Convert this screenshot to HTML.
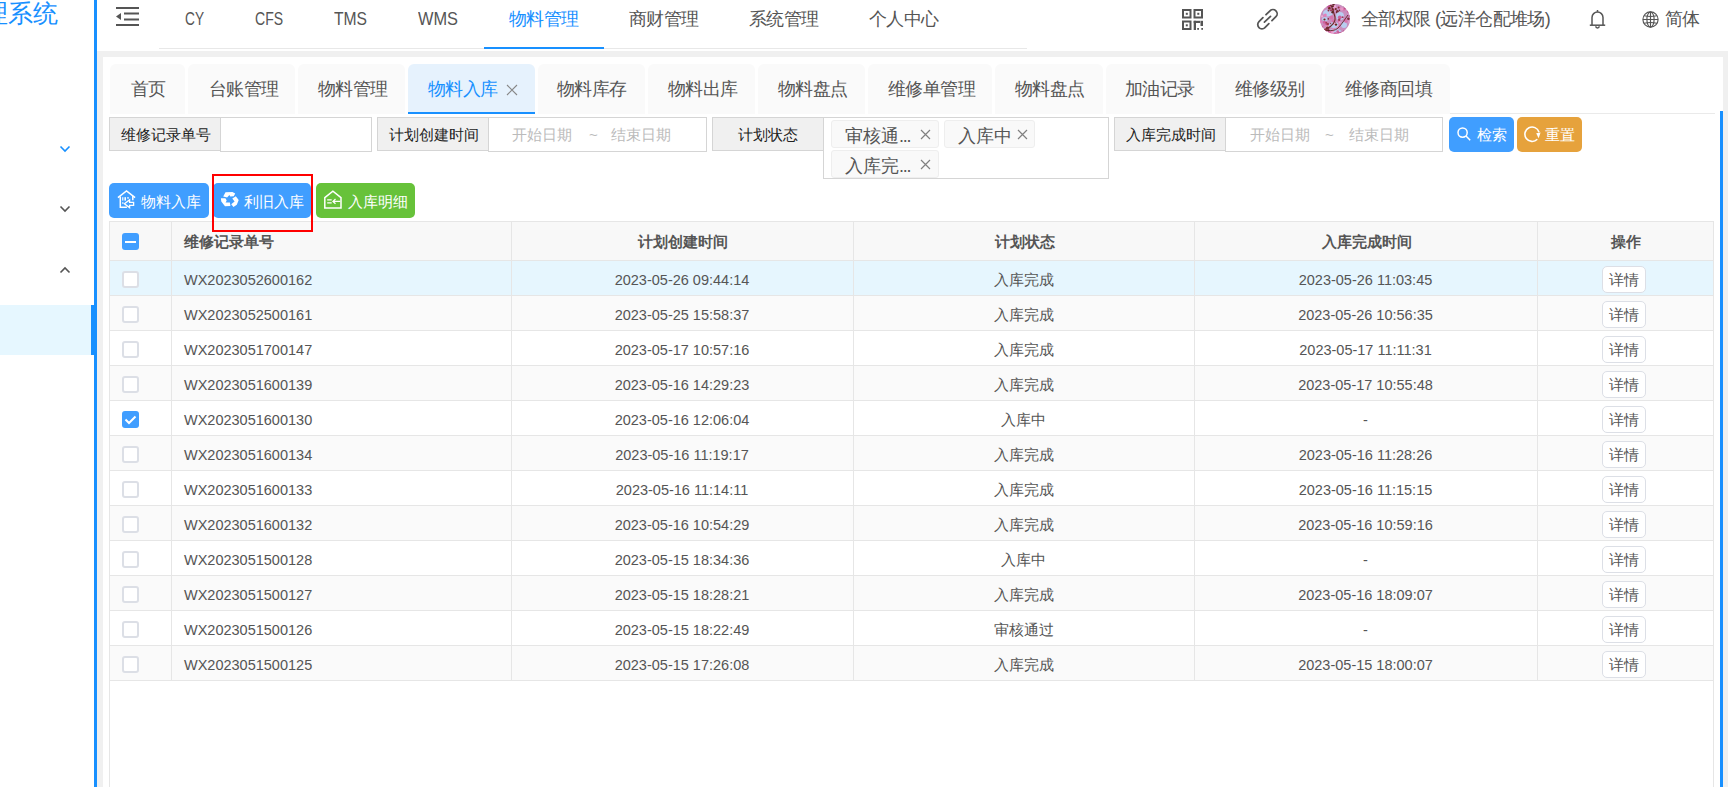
<!DOCTYPE html>
<html><head><meta charset="utf-8">
<style>
*{margin:0;padding:0;box-sizing:border-box}
html,body{width:1728px;height:787px;overflow:hidden;background:#fff;font-family:"Liberation Sans",sans-serif;color:#555}
.a{position:absolute}
.t{position:absolute;white-space:nowrap;line-height:1}
#side{left:0;top:0;width:97px;height:787px;background:#fff;border-right:3px solid #1890ff}
#gray{left:97px;top:51px;width:1631px;height:736px;background:#f0f0f0}
#panel{left:103px;top:57px;width:1620px;height:730px;background:#fff}
.nav{font-size:18px;color:#555;top:9.5px;letter-spacing:-0.6px}
.lat{font-size:18px;transform-origin:0 0;letter-spacing:0}
.tab{position:absolute;top:64px;height:50px;background:#fafafa;border-radius:6px 6px 0 0}
.tabt{font-size:18px;letter-spacing:-0.6px;color:#555;top:80px}
.lbl{position:absolute;background:#f0f0f0;border:1px solid #d5d5d5;height:34px}
.inp{position:absolute;background:#fff;border:1px solid #d5d5d5;height:35px}
.lt{font-size:15px;color:#222}
.ph{font-size:15px;color:#bbb}
.tag{position:absolute;background:#f9f9f9;border:1px solid #eee;border-radius:3px;height:28px}
.btn{position:absolute;border-radius:5px;height:35px;color:#fff}
.bt{font-size:15px;color:#fff}
.hl{position:absolute;height:1px;background:#e6e6e6}
.vl{position:absolute;width:1px;background:#e6e6e6}
.row{position:absolute;left:110px;width:1603px;height:35px}
.cb{position:absolute;left:122px;width:17px;height:17px;border:2px solid #dcdfe6;border-radius:3px;background:#fff}
.cell{font-size:14.5px;color:#555}
.hd{font-size:15px;color:#555;font-weight:bold}
.det{position:absolute;left:1602px;width:44px;height:27px;border:1px solid #dcdfe6;border-radius:5px;background:#fff}
</style></head><body>
<!-- sidebar -->
<div id="side" class="a"></div>
<div class="t" style="left:-16.6px;top:1px;font-size:25px;letter-spacing:-0.3px;color:#1890ff">理系统</div>
<svg class="a" style="left:59px;top:144px" width="12" height="10" viewBox="0 0 12 10"><path d="M1.5 2.5 L6 7 L10.5 2.5" fill="none" stroke="#1890ff" stroke-width="1.6"/></svg>
<svg class="a" style="left:59px;top:204px" width="12" height="10" viewBox="0 0 12 10"><path d="M1.5 2.5 L6 7 L10.5 2.5" fill="none" stroke="#555" stroke-width="1.6"/></svg>
<svg class="a" style="left:59px;top:265px" width="12" height="10" viewBox="0 0 12 10"><path d="M1.5 7.5 L6 3 L10.5 7.5" fill="none" stroke="#555" stroke-width="1.6"/></svg>
<div class="a" style="left:0;top:305px;width:91px;height:50px;background:#e6f7ff"></div>
<div class="a" style="left:91px;top:305px;width:6px;height:50px;background:#1890ff"></div>

<div id="gray" class="a"></div>
<div id="panel" class="a"></div>
<div class="a" style="left:1720px;top:111px;width:3px;height:676px;background:#1890ff"></div>

<!-- top nav -->
<svg class="a" style="left:116px;top:6px" width="24" height="21" viewBox="0 0 24 21"><g fill="#555"><rect x="0" y="1" width="23" height="2"/><rect x="8" y="6.5" width="15" height="2"/><rect x="8" y="12.5" width="15" height="2"/><rect x="0" y="18" width="23" height="2"/><path d="M0 10.5 L5 7 L5 14 Z"/></g></svg>
<div class="t nav lat" style="left:185px;transform:scaleX(0.76)">CY</div>
<div class="t nav lat" style="left:255px;transform:scaleX(0.78)">CFS</div>
<div class="t nav lat" style="left:334px;transform:scaleX(0.87)">TMS</div>
<div class="t nav lat" style="left:418px;transform:scaleX(0.91)">WMS</div>
<div class="t nav" style="left:509px;color:#1890ff">物料管理</div>
<div class="t nav" style="left:629px">商财管理</div>
<div class="t nav" style="left:749px">系统管理</div>
<div class="t nav" style="left:869px">个人中心</div>
<div class="a" style="left:159px;top:48px;width:868px;height:1px;background:#e8e8e8"></div>
<div class="a" style="left:484px;top:47px;width:120px;height:2px;background:#1890ff"></div>

<!-- right icons -->
<svg class="a" style="left:1182px;top:9px" width="21" height="21" viewBox="0 0 21 21"><g fill="none" stroke="#555" stroke-width="2"><rect x="1" y="1" width="7.5" height="7.5"/><rect x="12.5" y="1" width="7.5" height="7.5"/><rect x="1" y="12.5" width="7.5" height="7.5"/></g><g fill="#555"><rect x="3.8" y="3.8" width="2" height="2"/><rect x="15.3" y="3.8" width="2" height="2"/><rect x="3.8" y="15.3" width="2" height="2"/><rect x="11.7" y="11.8" width="2.3" height="9.4"/><rect x="11.7" y="11.8" width="6.5" height="2.2"/><rect x="18.5" y="11.8" width="2.6" height="5.2"/><rect x="15.2" y="19" width="1.8" height="1.8"/><rect x="19.3" y="19" width="1.8" height="1.8"/></g></svg>
<svg class="a" style="left:1256px;top:8px" width="24" height="24" viewBox="-1 -1 24 24"><g fill="none" stroke="#555" stroke-width="1.75" stroke-linecap="round"><path d="M9.02 5.74 L12.98 1.78 A4.2 4.2 0 0 1 18.92 7.72 L14.96 11.68"/><path d="M5.94 8.62 L1.98 12.58 A4.2 4.2 0 0 0 7.92 18.52 L11.88 14.56"/><path d="M7.4 13.1 L13.5 7.4"/></g></svg>
<svg class="a" style="left:1320px;top:4px" width="30" height="30" viewBox="0 0 30 30"><defs><clipPath id="cc"><circle cx="15" cy="15" r="15"/></clipPath></defs><g clip-path="url(#cc)"><rect width="30" height="30" fill="#c98fbf"/><ellipse cx="8" cy="9" rx="5" ry="3.5" fill="#b8cdf0"/><ellipse cx="20" cy="12" rx="4" ry="4" fill="#b8cdf0"/><ellipse cx="14" cy="21" rx="5" ry="3" fill="#b8cdf0"/><ellipse cx="24" cy="21" rx="3" ry="3" fill="#b8cdf0"/><ellipse cx="5" cy="15" rx="3" ry="2" fill="#b8cdf0"/><ellipse cx="15" cy="27" rx="6" ry="2" fill="#b8cdf0"/><circle cx="13.6" cy="16.8" r="1.9" fill="#d873ac"/><circle cx="13.6" cy="25.7" r="1.0" fill="#e895c6"/><circle cx="14.3" cy="18.4" r="1.0" fill="#d873ac"/><circle cx="9.1" cy="2.7" r="1.8" fill="#c0508a"/><circle cx="19.0" cy="17.9" r="1.3" fill="#d873ac"/><circle cx="19.6" cy="18.5" r="1.0" fill="#f0a8d4"/><circle cx="25.0" cy="1.9" r="0.8" fill="#e27fb8"/><circle cx="18.0" cy="23.3" r="1.2" fill="#e895c6"/><circle cx="25.3" cy="15.6" r="1.6" fill="#d873ac"/><circle cx="0.1" cy="2.5" r="1.6" fill="#d873ac"/><circle cx="29.9" cy="29.9" r="1.8" fill="#c0508a"/><circle cx="7.6" cy="22.7" r="1.4" fill="#f0a8d4"/><circle cx="2.1" cy="23.0" r="1.3" fill="#d0609c"/><circle cx="11.6" cy="28.7" r="1.8" fill="#f0a8d4"/><circle cx="6.4" cy="27.8" r="0.9" fill="#d873ac"/><circle cx="29.4" cy="11.9" r="0.9" fill="#c0508a"/><circle cx="6.0" cy="20.2" r="1.2" fill="#d0609c"/><circle cx="10.0" cy="28.9" r="1.7" fill="#f0a8d4"/><circle cx="4.0" cy="21.2" r="0.8" fill="#d873ac"/><circle cx="23.9" cy="5.3" r="1.5" fill="#d873ac"/><circle cx="15.3" cy="29.6" r="1.7" fill="#d873ac"/><circle cx="19.3" cy="3.5" r="1.3" fill="#e27fb8"/><circle cx="0.0" cy="25.9" r="2.0" fill="#e895c6"/><circle cx="9.1" cy="26.5" r="1.1" fill="#d873ac"/><circle cx="29.9" cy="18.1" r="1.5" fill="#f0a8d4"/><circle cx="29.7" cy="6.4" r="1.1" fill="#e895c6"/><circle cx="9.9" cy="8.9" r="0.9" fill="#f0a8d4"/><circle cx="6.3" cy="19.1" r="0.8" fill="#d0609c"/><circle cx="11.2" cy="13.6" r="2.0" fill="#d873ac"/><circle cx="25.0" cy="4.1" r="1.3" fill="#c0508a"/><circle cx="4.6" cy="27.3" r="1.8" fill="#e27fb8"/><circle cx="21.8" cy="4.8" r="1.6" fill="#e895c6"/><circle cx="5.9" cy="28.5" r="1.9" fill="#e895c6"/><circle cx="2.4" cy="1.4" r="0.9" fill="#e895c6"/><circle cx="28.9" cy="7.2" r="1.6" fill="#d0609c"/><circle cx="12.6" cy="27.1" r="1.4" fill="#e895c6"/><circle cx="5.3" cy="21.6" r="0.9" fill="#e27fb8"/><circle cx="14.4" cy="19.6" r="1.5" fill="#f0a8d4"/><circle cx="8.4" cy="27.5" r="1.0" fill="#f0a8d4"/><circle cx="2.1" cy="12.3" r="1.1" fill="#f0a8d4"/><circle cx="5.3" cy="11.1" r="1.5" fill="#e27fb8"/><circle cx="2.8" cy="4.2" r="1.3" fill="#d0609c"/><circle cx="19.7" cy="20.7" r="1.5" fill="#e27fb8"/><circle cx="17.7" cy="27.7" r="1.4" fill="#d0609c"/><circle cx="21.0" cy="28.9" r="0.8" fill="#c0508a"/><circle cx="2.2" cy="2.0" r="1.2" fill="#e27fb8"/><circle cx="30.0" cy="2.3" r="1.5" fill="#c0508a"/><circle cx="1.3" cy="28.1" r="1.7" fill="#e27fb8"/><circle cx="23.8" cy="27.5" r="1.2" fill="#c0508a"/><circle cx="14.2" cy="2.3" r="1.8" fill="#f0a8d4"/><circle cx="25.9" cy="17.2" r="1.5" fill="#d873ac"/><circle cx="11.4" cy="0.4" r="0.9" fill="#f0a8d4"/><circle cx="19.2" cy="29.8" r="1.9" fill="#c0508a"/><circle cx="9.9" cy="28.0" r="1.6" fill="#d873ac"/><circle cx="13.2" cy="25.2" r="0.9" fill="#e895c6"/><circle cx="0.9" cy="18.0" r="1.4" fill="#e27fb8"/><circle cx="28.7" cy="3.4" r="1.7" fill="#c0508a"/><circle cx="27.6" cy="7.7" r="0.8" fill="#d0609c"/><circle cx="4.3" cy="18.4" r="1.4" fill="#d0609c"/><circle cx="19.8" cy="13.3" r="1.9" fill="#d0609c"/><circle cx="12.9" cy="2.3" r="1.0" fill="#5a2020"/><circle cx="18.6" cy="3.5" r="1.0" fill="#8f3040"/><circle cx="10.5" cy="1.2" r="0.8" fill="#7a2a35"/><circle cx="16.5" cy="8.6" r="0.7" fill="#5a2020"/><circle cx="9.4" cy="4.2" r="1.2" fill="#6e2a22"/><circle cx="12.6" cy="4.7" r="1.0" fill="#a33a55"/><circle cx="13.4" cy="0.7" r="0.5" fill="#a33a55"/><circle cx="8.5" cy="6.4" r="1.0" fill="#8f3040"/><circle cx="15.8" cy="5.1" r="1.0" fill="#6e2a22"/><circle cx="13.5" cy="0.2" r="1.2" fill="#5a2020"/><circle cx="17.4" cy="7.2" r="1.3" fill="#7a2a35"/><circle cx="13.4" cy="5.7" r="1.0" fill="#8f3040"/><circle cx="19.5" cy="6.2" r="0.7" fill="#6e2a22"/><circle cx="11.1" cy="6.4" r="1.1" fill="#a33a55"/><circle cx="10.6" cy="19.6" r="0.7" fill="#8f3040"/><circle cx="8.5" cy="26.5" r="0.9" fill="#5a2020"/><circle cx="6.7" cy="25.1" r="1.2" fill="#7a2a35"/><circle cx="6.9" cy="26.0" r="0.8" fill="#6e2a22"/><circle cx="7.4" cy="23.6" r="1.2" fill="#6e2a22"/><circle cx="8.6" cy="23.9" r="0.9" fill="#8f3040"/><circle cx="7.6" cy="23.9" r="0.7" fill="#7a2a35"/><circle cx="4.6" cy="26.1" r="1.3" fill="#8f3040"/><circle cx="8.4" cy="25.1" r="0.8" fill="#7a2a35"/><circle cx="6.2" cy="18.7" r="0.9" fill="#a33a55"/><circle cx="12.6" cy="8.3" r="1.2" fill="#5a2020"/><circle cx="24.3" cy="1.9" r="1.1" fill="#5a2020"/><circle cx="16.0" cy="20.6" r="1.2" fill="#6e2a22"/><circle cx="4.5" cy="15.5" r="1.1" fill="#6e2a22"/><circle cx="28.4" cy="14.8" r="1.3" fill="#7a2a35"/><circle cx="22.7" cy="13.2" r="0.9" fill="#a33a55"/><circle cx="19.2" cy="15.7" r="1.2" fill="#a33a55"/><circle cx="7.7" cy="20.1" r="1.3" fill="#a33a55"/><circle cx="6.2" cy="25.5" r="1.3" fill="#a33a55"/><circle cx="8.2" cy="14.9" r="0.8" fill="#7a2a35"/><circle cx="15.1" cy="18.2" r="0.5" fill="#7a2a35"/><path d="M11 1 C13 6 14 9 15 13 C16 17 13 22 6 25" stroke="#6b2a2a" stroke-width="1.1" fill="none"/><path d="M28 11 C25 15 22 20 18 24 C15 27 10 27 4 26" stroke="#5c2626" stroke-width="0.9" fill="none"/></g></svg>
<div class="t nav" style="left:1361px">全部权限 (远洋仓配堆场)</div>
<svg class="a" style="left:1589px;top:9px" width="17" height="20" viewBox="0 0 17 20"><g fill="none" stroke="#555" stroke-width="1.5"><path d="M3 16 L3 8.5 A5.5 5.5 0 0 1 14 8.5 L14 16"/><path d="M0.8 16.2 L16.2 16.2"/><path d="M8.5 1 L8.5 2.8"/><path d="M6.8 17.2 A1.7 1.7 0 0 0 10.2 17.2"/></g></svg>
<svg class="a" style="left:1642px;top:11px" width="17" height="17" viewBox="0 0 17 17"><g fill="none" stroke="#555" stroke-width="1.15"><circle cx="8.5" cy="8.5" r="7.6"/><ellipse cx="8.5" cy="8.5" rx="3.6" ry="7.6"/><path d="M8.5 1 L8.5 16 M1 8.5 L16 8.5"/><path d="M2.2 4.8 Q8.5 6.2 14.8 4.8 M2.2 12.2 Q8.5 10.8 14.8 12.2"/></g></svg>
<div class="t nav" style="left:1665px">简体</div>

<!-- tabs -->
<div class="tab" style="left:110px;width:75px"></div>
<div class="tab" style="left:188px;width:107px"></div>
<div class="tab" style="left:298px;width:107px"></div>
<div class="tab" style="left:408px;width:127px;background:#e6f2fd"></div>
<div class="a" style="left:408px;top:112px;width:127px;height:2px;background:#1890ff"></div>
<div class="tab" style="left:538px;width:107px"></div>
<div class="tab" style="left:648px;width:107px"></div>
<div class="tab" style="left:758px;width:107px"></div>
<div class="tab" style="left:868px;width:124px"></div>
<div class="tab" style="left:995px;width:108px"></div>
<div class="tab" style="left:1106px;width:106px"></div>
<div class="tab" style="left:1215px;width:107px"></div>
<div class="tab" style="left:1325px;width:125px"></div>
<div class="a" style="left:1450px;top:113px;width:265px;height:1px;background:#eaeaea"></div>
<div class="t tabt" style="left:131px">首页</div>
<div class="t tabt" style="left:209px">台账管理</div>
<div class="t tabt" style="left:318px">物料管理</div>
<div class="t tabt" style="left:428px;color:#1890ff">物料入库</div>
<svg class="a" style="left:506px;top:84px" width="12" height="12" viewBox="0 0 12 12"><path d="M1 1 L11 11 M11 1 L1 11" stroke="#888" stroke-width="1.1"/></svg>
<div class="t tabt" style="left:557px">物料库存</div>
<div class="t tabt" style="left:668px">物料出库</div>
<div class="t tabt" style="left:778px">物料盘点</div>
<div class="t tabt" style="left:888px">维修单管理</div>
<div class="t tabt" style="left:1015px">物料盘点</div>
<div class="t tabt" style="left:1125px">加油记录</div>
<div class="t tabt" style="left:1235px">维修级别</div>
<div class="t tabt" style="left:1345px">维修商回填</div>

<!-- filters -->
<div class="lbl" style="left:109px;top:117px;width:113px"></div>
<div class="inp" style="left:220px;top:117px;width:152px"></div>
<div class="t lt" style="left:121px;top:127px">维修记录单号</div>

<div class="lbl" style="left:377px;top:117px;width:112px"></div>
<div class="inp" style="left:488px;top:117px;width:219px"></div>
<div class="t lt" style="left:389px;top:127px">计划创建时间</div>
<div class="t ph" style="left:512px;top:127px">开始日期</div>
<div class="t ph" style="left:589px;top:127px">~</div>
<div class="t ph" style="left:611px;top:127px">结束日期</div>

<div class="lbl" style="left:712px;top:117px;width:112px"></div>
<div class="inp" style="left:823px;top:117px;width:286px;height:62px"></div>
<div class="t lt" style="left:738px;top:127px">计划状态</div>
<div class="tag" style="left:831px;top:120px;width:108px"></div>
<div class="t" style="left:845px;top:127px;font-size:18px;color:#555">审核通<span style="letter-spacing:-1.3px">...</span></div>
<svg class="a" style="left:920px;top:129px" width="11" height="11" viewBox="0 0 11 11"><path d="M1 1 L10 10 M10 1 L1 10" stroke="#808080" stroke-width="1.2"/></svg>
<div class="tag" style="left:944px;top:120px;width:91px"></div>
<div class="t" style="left:958px;top:127px;font-size:18px;color:#555">入库中</div>
<svg class="a" style="left:1017px;top:129px" width="11" height="11" viewBox="0 0 11 11"><path d="M1 1 L10 10 M10 1 L1 10" stroke="#808080" stroke-width="1.2"/></svg>
<div class="tag" style="left:831px;top:150px;width:108px"></div>
<div class="t" style="left:845px;top:157px;font-size:18px;color:#555">入库完<span style="letter-spacing:-1.3px">...</span></div>
<svg class="a" style="left:920px;top:159px" width="11" height="11" viewBox="0 0 11 11"><path d="M1 1 L10 10 M10 1 L1 10" stroke="#808080" stroke-width="1.2"/></svg>

<div class="lbl" style="left:1114px;top:117px;width:112px"></div>
<div class="inp" style="left:1225px;top:117px;width:218px"></div>
<div class="t lt" style="left:1126px;top:127px">入库完成时间</div>
<div class="t ph" style="left:1250px;top:127px">开始日期</div>
<div class="t ph" style="left:1325px;top:127px">~</div>
<div class="t ph" style="left:1349px;top:127px">结束日期</div>

<div class="btn" style="left:1449px;top:117px;width:65px;background:#409eff"></div>
<svg class="a" style="left:1457px;top:127px" width="15" height="15" viewBox="0 0 15 15"><g fill="none" stroke="#fff" stroke-width="1.5"><circle cx="5.6" cy="5.6" r="4.6"/><path d="M9 9 L13.2 13.2"/></g></svg>
<div class="t bt" style="left:1477px;top:127px">检索</div>
<div class="btn" style="left:1517px;top:117px;width:65px;background:#e6a23c"></div>
<svg class="a" style="left:1518px;top:120px" width="28" height="28" viewBox="0 0 28 28"><path d="M19.3 19.2 A7.2 7.2 0 1 1 21.0 12.2" fill="none" stroke="#fff" stroke-width="1.6"/><path d="M18.2 13.2 L22.6 12.4 L20.6 18.2 Z" fill="#fff"/></svg>
<div class="t bt" style="left:1545px;top:127px">重置</div>

<!-- toolbar -->
<div class="btn" style="left:109px;top:183px;width:100px;background:#409eff"></div>
<svg class="a" style="left:112px;top:185px" width="30" height="30" viewBox="0 0 30 30"><g fill="none" stroke="#fff" stroke-width="1.5" stroke-linejoin="miter"><path d="M5.9 12.6 L14.5 6 L23.1 12.6"/><path d="M8.3 11.6 L8.3 22.3 L14.9 22.3"/><path d="M20.8 10.8 L20.8 15.3"/><path d="M12.4 18.7 L17.6 14.9 L17.6 17.3 L21.6 17.3 L21.6 20.3 L17.6 20.3 L17.6 22.6 Z" stroke-width="1.3"/></g><g fill="#fff"><rect x="10.2" y="12.2" width="1" height="3.4"/><rect x="11.8" y="12.2" width="0.8" height="3.4"/><rect x="13" y="12.2" width="1" height="3.4"/><rect x="15.2" y="12.2" width="1.6" height="1.4"/><rect x="10.1" y="17.3" width="1.4" height="1.4"/></g></svg>
<div class="t bt" style="left:141px;top:194px">物料入库</div>
<div class="btn" style="left:213px;top:183px;width:98px;background:#409eff"></div>
<svg class="a" style="left:219px;top:189px" width="22" height="22" viewBox="0 0 22 22"><g fill="#fff"><path d="M4.2 7.6 L6.5 3.3 L13.4 2.9 L16.2 4.4 L14.8 7.2 L11.3 7.5 L10.4 5.9 L8.1 8.4 Z"/><path d="M13.3 9.6 L16.8 7.2 L19.7 11 L17.8 15.8 L14.5 17.9 L12.2 15.2 L15.6 12.6 Z"/><path d="M1.9 9.2 L6.4 9.2 L7.7 11.5 L6.6 13.4 L10.9 13.4 L11.4 17.1 L6 17.3 L2.3 12.4 Z"/></g></svg>
<div class="t bt" style="left:244px;top:194px">利旧入库</div>
<div class="btn" style="left:316px;top:183px;width:99px;background:#67c23a"></div>
<svg class="a" style="left:318px;top:185px" width="30" height="30" viewBox="0 0 30 30"><g fill="none" stroke="#fff" stroke-width="1.5"><path d="M6.8 12.7 L14.9 6.2 L23 12.7 L23 22.9 L6.8 22.9 Z"/><path d="M9.2 14.9 L13.7 14.9 M9.2 17.9 L13.7 17.9" stroke-width="1.4"/><path d="M22.2 16.4 L15 16.4 M17.5 14 L15 16.4 L17.5 18.8" stroke-width="1.3"/></g></svg>
<div class="t bt" style="left:348px;top:194px">入库明细</div>

<!-- table -->
<div class="a" style="left:109px;top:221px;width:1605px;height:566px;border:1px solid #e6e6e6;border-bottom:none"></div>
<div class="a" style="left:110px;top:222px;width:1603px;height:38px;background:#f8f8f8"></div>
<!--ROWS-->
<div class="t hd" style="left:171px;width:340px;padding-left:13px;top:234px">维修记录单号</div>
<div class="t hd" style="left:511px;width:342px;text-align:center;padding-left:2px;top:234px">计划创建时间</div>
<div class="t hd" style="left:853px;width:341px;text-align:center;padding-left:2px;top:234px">计划状态</div>
<div class="t hd" style="left:1194px;width:343px;text-align:center;padding-left:2px;top:234px">入库完成时间</div>
<div class="t hd" style="left:1537px;width:176px;text-align:center;padding-left:2px;top:234px">操作</div>
<div class="cb" style="top:233px;border:none;background:#409eff"><div class="a" style="left:3px;top:7.5px;width:11px;height:2px;background:#fff"></div></div>
<div class="row" style="top:261px;background:#e6f6fe"></div>
<div class="cb" style="top:271px;width:17px;height:17px"></div>
<div class="t cell" style="left:184px;top:272.5px">WX2023052600162</div>
<div class="t cell" style="left:511px;width:342px;text-align:center;top:272.5px">2023-05-26 09:44:14</div>
<div class="t cell" style="left:853px;width:341px;text-align:center;top:272.5px">入库完成</div>
<div class="t cell" style="left:1194px;width:343px;text-align:center;top:272.5px">2023-05-26 11:03:45</div>
<div class="det" style="top:266px"></div>
<div class="t cell" style="left:1609px;top:273.0px">详情</div>
<div class="row" style="top:296px;background:#fafafa"></div>
<div class="cb" style="top:306px;width:17px;height:17px"></div>
<div class="t cell" style="left:184px;top:307.5px">WX2023052500161</div>
<div class="t cell" style="left:511px;width:342px;text-align:center;top:307.5px">2023-05-25 15:58:37</div>
<div class="t cell" style="left:853px;width:341px;text-align:center;top:307.5px">入库完成</div>
<div class="t cell" style="left:1194px;width:343px;text-align:center;top:307.5px">2023-05-26 10:56:35</div>
<div class="det" style="top:301px"></div>
<div class="t cell" style="left:1609px;top:308.0px">详情</div>
<div class="row" style="top:331px;background:#fff"></div>
<div class="cb" style="top:341px;width:17px;height:17px"></div>
<div class="t cell" style="left:184px;top:342.5px">WX2023051700147</div>
<div class="t cell" style="left:511px;width:342px;text-align:center;top:342.5px">2023-05-17 10:57:16</div>
<div class="t cell" style="left:853px;width:341px;text-align:center;top:342.5px">入库完成</div>
<div class="t cell" style="left:1194px;width:343px;text-align:center;top:342.5px">2023-05-17 11:11:31</div>
<div class="det" style="top:336px"></div>
<div class="t cell" style="left:1609px;top:343.0px">详情</div>
<div class="row" style="top:366px;background:#fafafa"></div>
<div class="cb" style="top:376px;width:17px;height:17px"></div>
<div class="t cell" style="left:184px;top:377.5px">WX2023051600139</div>
<div class="t cell" style="left:511px;width:342px;text-align:center;top:377.5px">2023-05-16 14:29:23</div>
<div class="t cell" style="left:853px;width:341px;text-align:center;top:377.5px">入库完成</div>
<div class="t cell" style="left:1194px;width:343px;text-align:center;top:377.5px">2023-05-17 10:55:48</div>
<div class="det" style="top:371px"></div>
<div class="t cell" style="left:1609px;top:378.0px">详情</div>
<div class="row" style="top:401px;background:#fff"></div>
<div class="cb" style="top:411px;border:none;background:#409eff"><svg class="a" style="left:0;top:0" width="17" height="17" viewBox="0 0 17 17"><path d="M3.5 8.5 L7 12 L13.5 5.5" fill="none" stroke="#fff" stroke-width="2"/></svg></div>
<div class="t cell" style="left:184px;top:412.5px">WX2023051600130</div>
<div class="t cell" style="left:511px;width:342px;text-align:center;top:412.5px">2023-05-16 12:06:04</div>
<div class="t cell" style="left:853px;width:341px;text-align:center;top:412.5px">入库中</div>
<div class="t cell" style="left:1194px;width:343px;text-align:center;top:412.5px">-</div>
<div class="det" style="top:406px"></div>
<div class="t cell" style="left:1609px;top:413.0px">详情</div>
<div class="row" style="top:436px;background:#fafafa"></div>
<div class="cb" style="top:446px;width:17px;height:17px"></div>
<div class="t cell" style="left:184px;top:447.5px">WX2023051600134</div>
<div class="t cell" style="left:511px;width:342px;text-align:center;top:447.5px">2023-05-16 11:19:17</div>
<div class="t cell" style="left:853px;width:341px;text-align:center;top:447.5px">入库完成</div>
<div class="t cell" style="left:1194px;width:343px;text-align:center;top:447.5px">2023-05-16 11:28:26</div>
<div class="det" style="top:441px"></div>
<div class="t cell" style="left:1609px;top:448.0px">详情</div>
<div class="row" style="top:471px;background:#fff"></div>
<div class="cb" style="top:481px;width:17px;height:17px"></div>
<div class="t cell" style="left:184px;top:482.5px">WX2023051600133</div>
<div class="t cell" style="left:511px;width:342px;text-align:center;top:482.5px">2023-05-16 11:14:11</div>
<div class="t cell" style="left:853px;width:341px;text-align:center;top:482.5px">入库完成</div>
<div class="t cell" style="left:1194px;width:343px;text-align:center;top:482.5px">2023-05-16 11:15:15</div>
<div class="det" style="top:476px"></div>
<div class="t cell" style="left:1609px;top:483.0px">详情</div>
<div class="row" style="top:506px;background:#fafafa"></div>
<div class="cb" style="top:516px;width:17px;height:17px"></div>
<div class="t cell" style="left:184px;top:517.5px">WX2023051600132</div>
<div class="t cell" style="left:511px;width:342px;text-align:center;top:517.5px">2023-05-16 10:54:29</div>
<div class="t cell" style="left:853px;width:341px;text-align:center;top:517.5px">入库完成</div>
<div class="t cell" style="left:1194px;width:343px;text-align:center;top:517.5px">2023-05-16 10:59:16</div>
<div class="det" style="top:511px"></div>
<div class="t cell" style="left:1609px;top:518.0px">详情</div>
<div class="row" style="top:541px;background:#fff"></div>
<div class="cb" style="top:551px;width:17px;height:17px"></div>
<div class="t cell" style="left:184px;top:552.5px">WX2023051500128</div>
<div class="t cell" style="left:511px;width:342px;text-align:center;top:552.5px">2023-05-15 18:34:36</div>
<div class="t cell" style="left:853px;width:341px;text-align:center;top:552.5px">入库中</div>
<div class="t cell" style="left:1194px;width:343px;text-align:center;top:552.5px">-</div>
<div class="det" style="top:546px"></div>
<div class="t cell" style="left:1609px;top:553.0px">详情</div>
<div class="row" style="top:576px;background:#fafafa"></div>
<div class="cb" style="top:586px;width:17px;height:17px"></div>
<div class="t cell" style="left:184px;top:587.5px">WX2023051500127</div>
<div class="t cell" style="left:511px;width:342px;text-align:center;top:587.5px">2023-05-15 18:28:21</div>
<div class="t cell" style="left:853px;width:341px;text-align:center;top:587.5px">入库完成</div>
<div class="t cell" style="left:1194px;width:343px;text-align:center;top:587.5px">2023-05-16 18:09:07</div>
<div class="det" style="top:581px"></div>
<div class="t cell" style="left:1609px;top:588.0px">详情</div>
<div class="row" style="top:611px;background:#fff"></div>
<div class="cb" style="top:621px;width:17px;height:17px"></div>
<div class="t cell" style="left:184px;top:622.5px">WX2023051500126</div>
<div class="t cell" style="left:511px;width:342px;text-align:center;top:622.5px">2023-05-15 18:22:49</div>
<div class="t cell" style="left:853px;width:341px;text-align:center;top:622.5px">审核通过</div>
<div class="t cell" style="left:1194px;width:343px;text-align:center;top:622.5px">-</div>
<div class="det" style="top:616px"></div>
<div class="t cell" style="left:1609px;top:623.0px">详情</div>
<div class="row" style="top:646px;background:#fafafa"></div>
<div class="cb" style="top:656px;width:17px;height:17px"></div>
<div class="t cell" style="left:184px;top:657.5px">WX2023051500125</div>
<div class="t cell" style="left:511px;width:342px;text-align:center;top:657.5px">2023-05-15 17:26:08</div>
<div class="t cell" style="left:853px;width:341px;text-align:center;top:657.5px">入库完成</div>
<div class="t cell" style="left:1194px;width:343px;text-align:center;top:657.5px">2023-05-15 18:00:07</div>
<div class="det" style="top:651px"></div>
<div class="t cell" style="left:1609px;top:658.0px">详情</div>
<div class="hl" style="left:110px;top:260px;width:1603px"></div>
<div class="hl" style="left:110px;top:295px;width:1603px"></div>
<div class="hl" style="left:110px;top:330px;width:1603px"></div>
<div class="hl" style="left:110px;top:365px;width:1603px"></div>
<div class="hl" style="left:110px;top:400px;width:1603px"></div>
<div class="hl" style="left:110px;top:435px;width:1603px"></div>
<div class="hl" style="left:110px;top:470px;width:1603px"></div>
<div class="hl" style="left:110px;top:505px;width:1603px"></div>
<div class="hl" style="left:110px;top:540px;width:1603px"></div>
<div class="hl" style="left:110px;top:575px;width:1603px"></div>
<div class="hl" style="left:110px;top:610px;width:1603px"></div>
<div class="hl" style="left:110px;top:645px;width:1603px"></div>
<div class="hl" style="left:110px;top:680px;width:1603px"></div>
<div class="vl" style="left:171px;top:222px;height:458px"></div>
<div class="vl" style="left:511px;top:222px;height:458px"></div>
<div class="vl" style="left:853px;top:222px;height:458px"></div>
<div class="vl" style="left:1194px;top:222px;height:458px"></div>
<div class="vl" style="left:1537px;top:222px;height:458px"></div>
<!--/ROWS-->
<div class="a" style="left:212px;top:174px;width:101px;height:58px;border:2px solid #f00"></div>
</body></html>
